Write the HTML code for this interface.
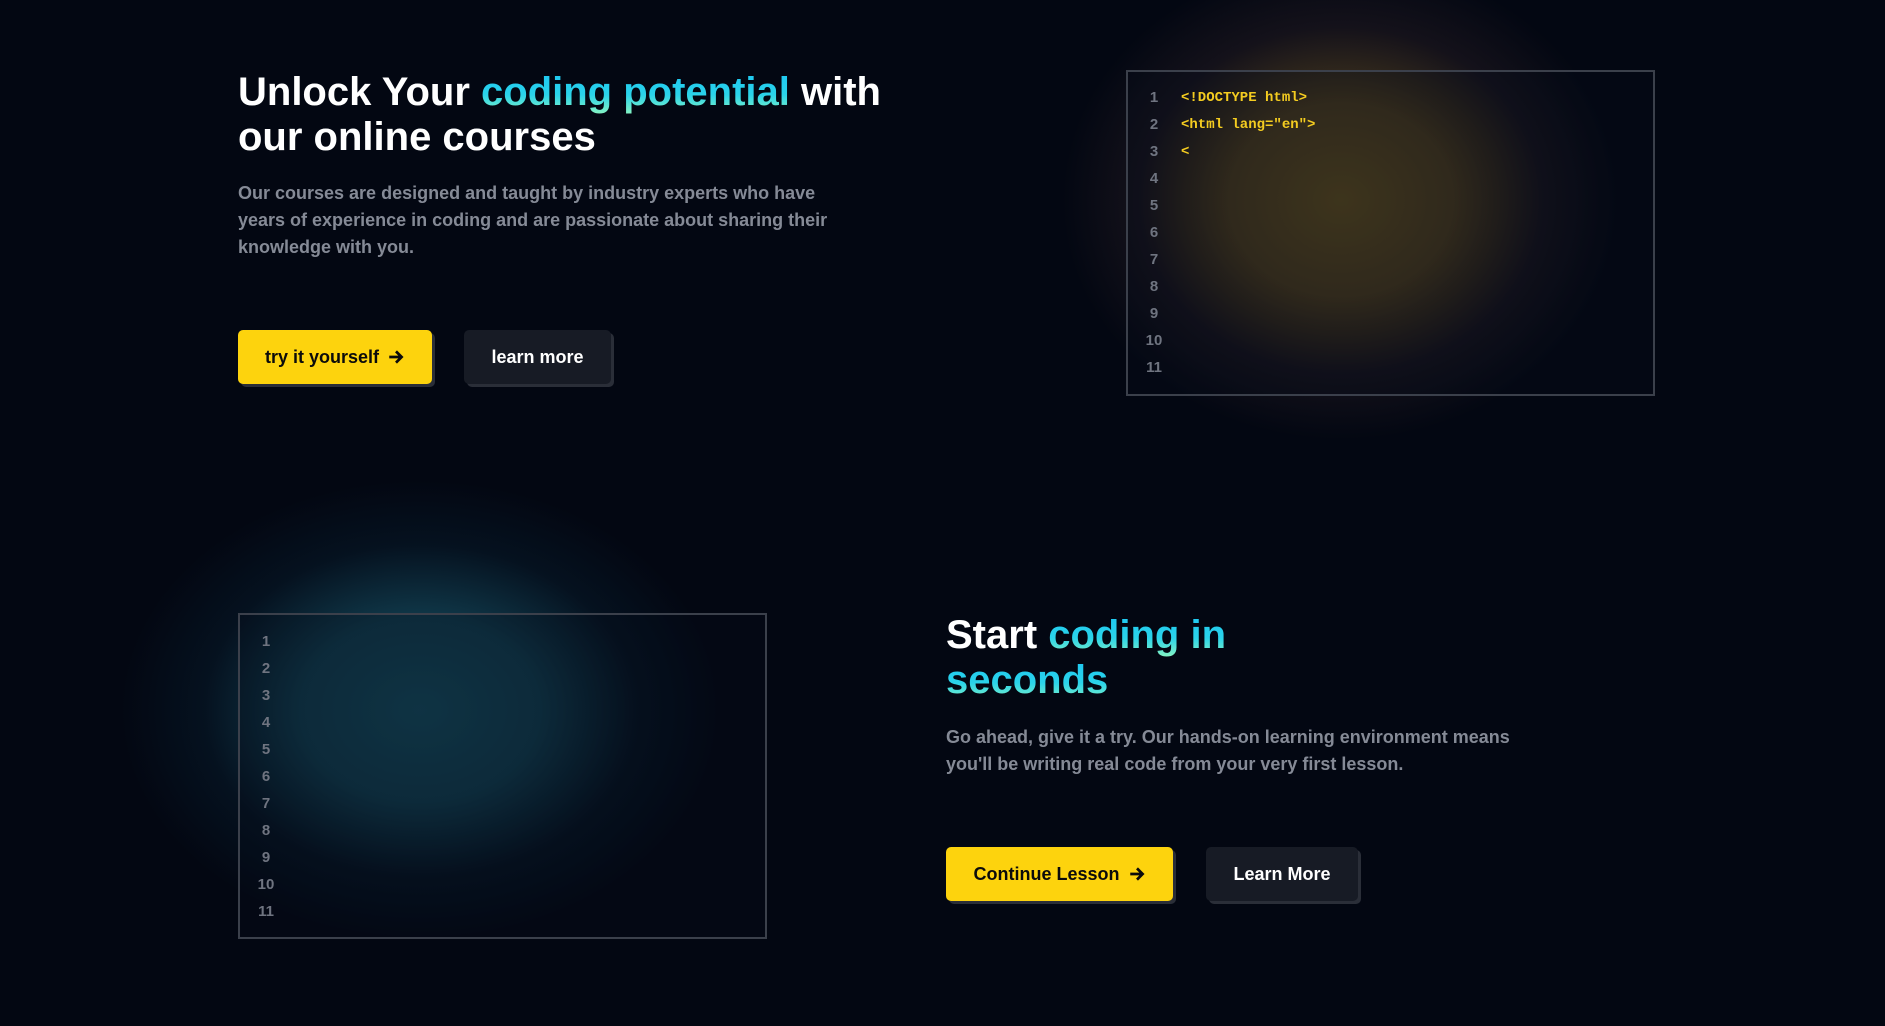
<!DOCTYPE html>
<html><head><style>
*{margin:0;padding:0;box-sizing:border-box}
body{width:1885px;height:1026px;background:#030712;overflow:hidden;position:relative;font-family:"Liberation Sans",Arial,sans-serif}
.abs{position:absolute}
h1{position:absolute;font-size:40px;line-height:45px;font-weight:700;color:#fff;white-space:nowrap}
.g{background:linear-gradient(180deg,#1cc6f2 0%,#2ad3ea 55%,#8af5c0 100%);background-size:100% 45px;background-repeat:repeat-y;-webkit-background-clip:text;background-clip:text;color:transparent}
p{position:absolute;font-size:18px;line-height:27px;font-weight:700;color:#858a96;white-space:nowrap}
.btn{position:absolute;height:54px;border-radius:5px;font-weight:700;font-size:18px;display:flex;align-items:center;justify-content:center;gap:8px}
.y{background:#fdd30d;color:#0b0b0b;box-shadow:3px 3px 0 #2a2e38}
.d{background:#171b25;color:#fff;box-shadow:3px 3px 0 #2a2e38}
.box{position:absolute;border:2px solid #3b404b;background:rgba(8,14,28,0.3);overflow:hidden}
.ln{position:absolute;font-size:15px;font-weight:700;color:#6f7480;width:30px;text-align:center}
.code{position:absolute;font-family:"Liberation Mono","DejaVu Sans Mono",monospace;font-weight:700;font-size:14px;color:#f4cc20;white-space:nowrap}
.blob{position:absolute}
</style></head><body>
<div class="blob" style="left:1000px;top:-40px;width:620px;height:480px;background:radial-gradient(ellipse closest-side at 55% 50%,rgba(120,96,34,0.7) 0%,rgba(105,82,35,0.62) 40%,rgba(60,42,45,0.3) 72%,rgba(3,7,18,0) 100%)"></div>
<div class="blob" style="left:120px;top:480px;width:600px;height:460px;background:radial-gradient(ellipse closest-side at 50% 50%,rgba(24,88,108,0.75) 0%,rgba(22,80,100,0.66) 40%,rgba(10,42,62,0.3) 72%,rgba(3,7,18,0) 100%)"></div>

<h1 style="left:238px;top:70px">Unlock Your <span class="g">coding potential</span> with<br>our online courses</h1>
<p style="left:238px;top:180px">Our courses are designed and taught by industry experts who have<br>years of experience in coding and are passionate about sharing their<br>knowledge with you.</p>
<div class="btn y" style="left:238px;top:330px;width:194px">try it yourself <svg width="18" height="18" viewBox="0 0 16 16"><path d="M2 8h11M8 3l5 5-5 5" stroke="#0b0b0b" stroke-width="2.4" fill="none"/></svg></div>
<div class="btn d" style="left:464px;top:330px;width:147px">learn more</div>

<div class="box" style="left:1126px;top:70px;width:529px;height:326px"></div>
<div class="abs" style="left:1139px;top:89px">
<div class="ln" style="top:0">1</div><div class="ln" style="top:27px">2</div><div class="ln" style="top:54px">3</div><div class="ln" style="top:81px">4</div><div class="ln" style="top:108px">5</div><div class="ln" style="top:135px">6</div><div class="ln" style="top:162px">7</div><div class="ln" style="top:189px">8</div><div class="ln" style="top:216px">9</div><div class="ln" style="top:243px">10</div><div class="ln" style="top:270px">11</div>
<div class="code" style="left:42px;top:1px">&lt;!DOCTYPE html&gt;</div>
<div class="code" style="left:42px;top:28px">&lt;html lang="en"&gt;</div>
<div class="code" style="left:42px;top:55px">&lt;</div>
</div>

<div class="box" style="left:238px;top:613px;width:529px;height:326px"></div>
<div class="abs" style="left:251px;top:633px">
<div class="ln" style="top:0">1</div><div class="ln" style="top:27px">2</div><div class="ln" style="top:54px">3</div><div class="ln" style="top:81px">4</div><div class="ln" style="top:108px">5</div><div class="ln" style="top:135px">6</div><div class="ln" style="top:162px">7</div><div class="ln" style="top:189px">8</div><div class="ln" style="top:216px">9</div><div class="ln" style="top:243px">10</div><div class="ln" style="top:270px">11</div>
</div>

<h1 style="left:946px;top:613px">Start <span class="g">coding in</span><br><span class="g">seconds</span></h1>
<p style="left:946px;top:724px">Go ahead, give it a try. Our hands-on learning environment means<br>you'll be writing real code from your very first lesson.</p>
<div class="btn y" style="left:946px;top:847px;width:227px">Continue Lesson <svg width="18" height="18" viewBox="0 0 16 16"><path d="M2 8h11M8 3l5 5-5 5" stroke="#0b0b0b" stroke-width="2.4" fill="none"/></svg></div>
<div class="btn d" style="left:1206px;top:847px;width:152px">Learn More</div>
</body></html>
